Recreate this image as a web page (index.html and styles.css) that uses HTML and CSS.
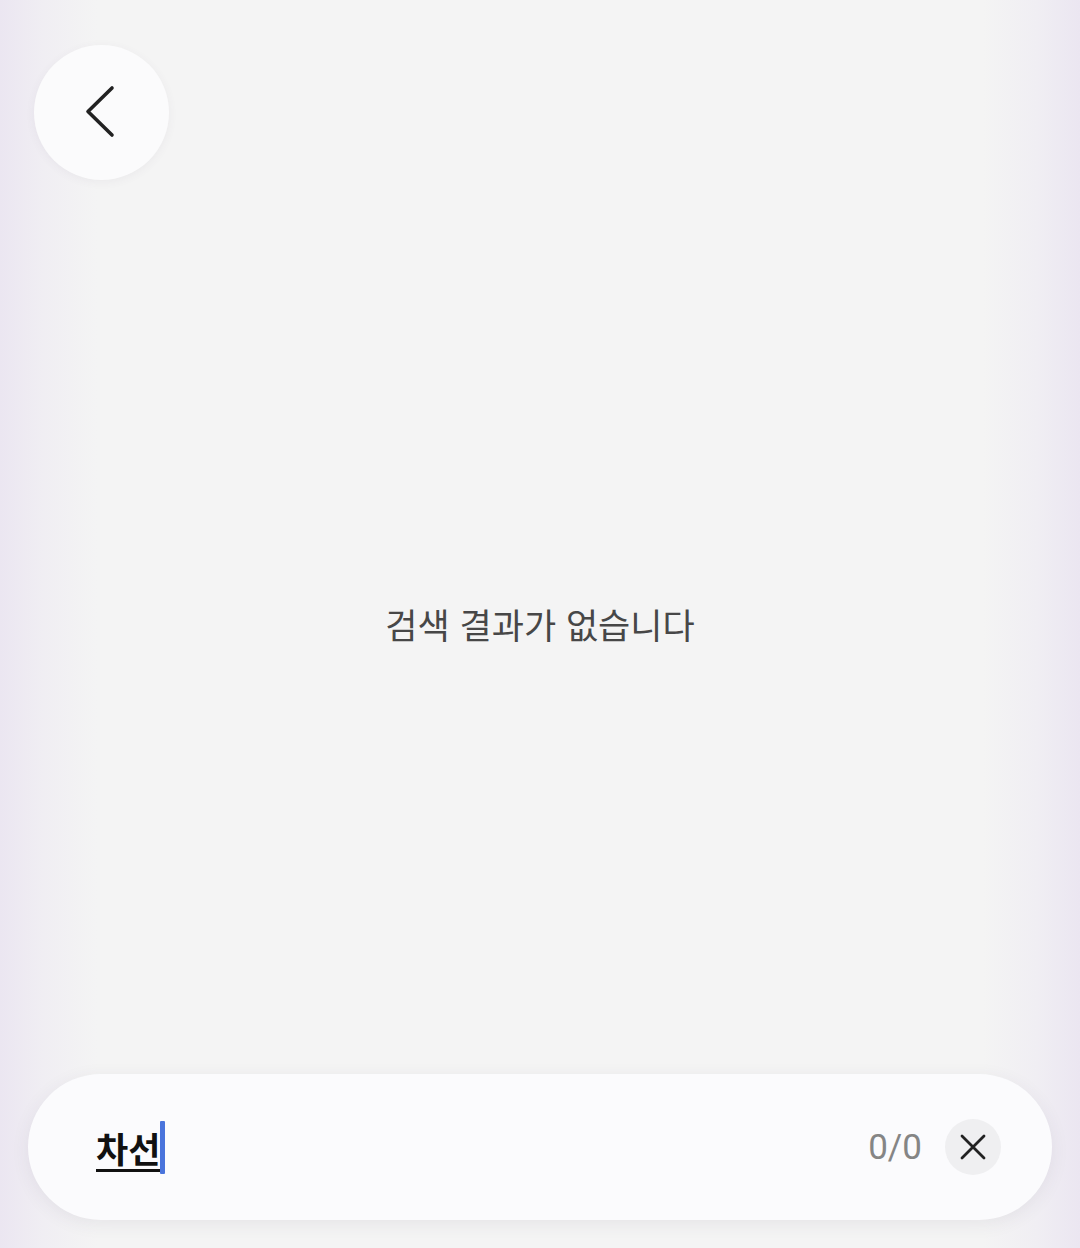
FILE: index.html
```html
<!DOCTYPE html>
<html lang="ko">

<head>
    <meta charset="UTF-8">
    <meta name="viewport" content="width=device-width, initial-scale=1.0">
    <title>검색</title>
    <link rel="stylesheet" href="styles.css">
</head>

<body>
    <div class="topo">
        <button class="voltar" aria-label="뒤로">
            <svg width="40" height="60" viewBox="0 0 40 60">
                <path d="M28 5 L4 28.5 L28 52" fill="none" stroke="#222" stroke-width="3.6" stroke-linecap="round" stroke-linejoin="round" />
            </svg>
        </button>
    </div>

    <div class="resultado">
        <p>검색 결과가 없습니다</p>
    </div>

    <div class="rodape">
        <div class="busca">
            <span class="termo">차선</span><span class="cursor"></span>
            <span class="contagem">0/0</span>
            <button class="limpar" aria-label="지우기">
                <svg width="28" height="28" viewBox="0 0 28 28">
                    <path d="M3 3 L25 25 M25 3 L3 25" fill="none" stroke="#222" stroke-width="2.8" stroke-linecap="round" />
                </svg>
            </button>
        </div>
    </div>
</body>

</html>
```

FILE: styles.css
```css
html,
body {
    height: 100%;
}

body {
    margin: 0;
    font-family: "Noto Sans CJK KR", "Noto Sans", sans-serif;
    background: linear-gradient(to right, #ebe6f1 0%, #f0eef3 4%, #f4f4f4 9%, #f4f4f4 91%, #f0eef3 96%, #ebe6f1 100%);
    display: flex;
    flex-direction: column;
}

.topo {
    padding: 45px 0 0 34px;
}

.voltar {
    width: 135px;
    height: 135px;
    border-radius: 50%;
    border: none;
    background-color: #fbfbfc;
    box-shadow: 0 2px 10px rgba(80, 70, 110, 0.06);
    display: flex;
    justify-content: center;
    align-items: center;
    padding: 0 0 0 4px;
    cursor: pointer;
}

.resultado {
    flex: 1;
    display: flex;
    justify-content: center;
    align-items: center;
    padding-bottom: 8px;
}

.resultado p {
    margin: 0;
    font-size: 35px;
    color: #474747;
}

.rodape {
    padding: 0 28px 28px;
}

.busca {
    height: 146px;
    border-radius: 73px;
    background-color: #fbfbfd;
    box-shadow: 0 4px 18px rgba(60, 50, 90, 0.08);
    display: flex;
    align-items: center;
    padding: 0 51px 0 68px;
}

.termo {
    font-size: 35px;
    font-weight: 700;
    color: #111;
    text-decoration: underline;
    text-decoration-thickness: 3px;
    text-underline-offset: 6px;
}

.cursor {
    width: 5px;
    height: 53px;
    background-color: #4a74dc;
    border-radius: 1px;
}

.contagem {
    margin-left: auto;
    font-size: 35px;
    color: #858585;
    font-family: Roboto, "Noto Sans", sans-serif;
}

.limpar {
    width: 56px;
    height: 56px;
    border-radius: 50%;
    border: none;
    background-color: #efeff1;
    margin-left: 23px;
    display: flex;
    justify-content: center;
    align-items: center;
    padding: 0;
    cursor: pointer;
}

.limpar svg {
    width: 28px;
    height: 28px;
}
```
